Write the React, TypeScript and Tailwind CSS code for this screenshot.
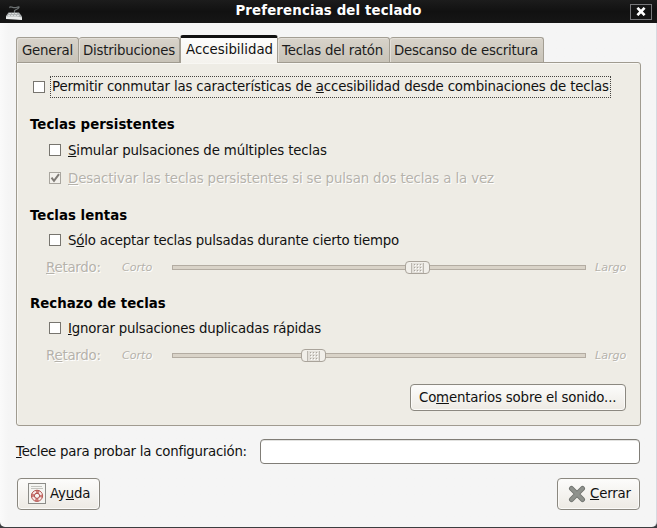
import type { ReactNode } from "react";

function Check({ checked = false }: { checked?: boolean }) {
  return (
    <span
      className={
        "block size-[12px] shrink-0 border " +
        (checked ? "border-[#a8a59e] bg-[#f3f1ec]" : "border-[#77756f] bg-white")
      }
    >
      {checked && (
        <svg viewBox="0 0 10 10" className="block size-[10px]" fill="none" stroke="#7f7b76" strokeWidth="2">
          <path d="M1.5 4.6 L4 7.8 L9 1.2" />
        </svg>
      )}
    </span>
  );
}

function Tab({ className, children }: { className: string; children: ReactNode }) {
  return (
    <div
      className={
        "h-[25px] shrink-0 whitespace-nowrap rounded-t-[3px] border border-b-0 border-[#a39e93] bg-linear-to-b from-[#d8d3ca] to-[#c8c3b8] leading-[26px] tracking-[-0.22px] text-[#1c1c1c] shadow-[inset_1px_1px_0_#e3dfd8] " +
        className
      }
    >
      {children}
    </div>
  );
}

function Heading({ children, className }: { children: ReactNode; className: string }) {
  return (
    <div className={"h-5 whitespace-nowrap pl-[13px] font-bold leading-[22px] tracking-[0.03px] text-black " + className}>
      {children}
    </div>
  );
}

function Option({
  children,
  className,
  disabled = false,
}: {
  children: ReactNode;
  className: string;
  disabled?: boolean;
}) {
  return (
    <div className={"flex h-5 items-center whitespace-nowrap pl-8 " + className}>
      <Check checked={disabled} />
      <span
        className={
          "h-5 pl-[7px] leading-[22px] " + (disabled ? "text-[#b5b2ab] [text-shadow:1px_1px_0_#ffffff]" : "")
        }
      >
        {children}
      </span>
    </div>
  );
}

function Delay({ thumb, children }: { thumb: string; children: ReactNode }) {
  return (
    <div className="mt-[7px] flex h-5 items-center whitespace-nowrap pl-[29px] leading-5 text-[#b5b2ab] [text-shadow:1px_1px_0_#ffffff]">
      <span className="h-5 w-[76px] leading-[22px] tracking-[-0.24px]">{children}</span>
      <span className="w-[50px] pt-px text-[11.1px] italic tracking-normal">Corto</span>
      <div className="relative mt-px h-[5px] w-[414px] border border-[#b3aca2] bg-[#d9d3c8]">
        <div
          className={
            "absolute -top-[5px] flex h-[13px] w-[25px] items-center justify-center rounded-[4px] border border-[#a9a39a] bg-[#f1efea] " +
            thumb
          }
        >
          <svg width="13" height="10" viewBox="0 0 13 10">
            <rect x="0" y="0" width="13" height="10" fill="#e2dfd9" />
            <path d="M.5 0V10M12.5 0V10" stroke="#bbb7b0" />
            <path d="M3 1.5H12M3 4.5H12M3 7.5H12" stroke="#aaa69f" strokeDasharray="1 2" />
            <path d="M4 2.5H12M4 5.5H12M4 8.5H12" stroke="#ffffff" strokeDasharray="1 2" />
          </svg>
        </div>
      </div>
      <span className="pl-[9px] pt-px text-[11.1px] italic tracking-normal">Largo</span>
    </div>
  );
}

const button =
  "flex shrink-0 items-center whitespace-nowrap rounded-[4px] border border-[#8b8880] bg-linear-to-b from-[#fcfcfb] to-[#edeae4] tracking-[-0.18px] shadow-[inset_0_0_0_1px_#fbfaf8]";

export default function App() {
  return (
    <div className="flex h-[528px] w-[657px] flex-col overflow-hidden bg-[#3c3d40] font-['DejaVu_Sans',sans-serif] text-[13.33px] tracking-[-0.16px] text-[#111111]">
      <header className="flex h-[23px] shrink-0 items-center bg-linear-to-b from-[#1c1c1c] via-[#111111] to-[#161616]">
        <svg width="18" height="17" viewBox="0 0 18 17" className="ml-[5px] mt-[2px] shrink-0">
          <path d="M5 4C4 1 8 4.500 11 3.500S15 2.500 13 4.500L9.500 6.500V9" fill="none" stroke="#6d7273" strokeWidth="1.2" />
          <path d="M3.500 8.500H14L17 12.500V15.500L1 14V12Z" fill="#aeb2b3" />
          <path d="M1 12.500H12L17 13.500V16L1 15Z" fill="#e9ebeb" />
          <path d="M4 9.500H13M3 11.500H14.500" stroke="#d9dcdc" strokeDasharray="2 1" />
        </svg>
        <h1 className="grow whitespace-nowrap pb-[2px] pl-[4px] text-center text-[13.33px] font-bold leading-5 tracking-[0.14px] text-white">
          Preferencias del teclado
        </h1>
        <div className="mr-[5px] flex h-4 w-[22px] items-center justify-center border border-[#77777a]">
          <svg width="10" height="9" viewBox="0 0 10 9" stroke="white" strokeWidth="2.6">
            <path d="M1.4 .8L8.6 8.2M8.6 .8L1.4 8.2" />
          </svg>
        </div>
      </header>
      <main className="h-[504px] shrink-0 rounded-b-[5px] border-r border-[#d7d9e0] bg-linear-to-r from-[#fafafa] to-[#f5f5f5] to-[8px] px-4 pt-3">
        <nav className="flex h-[27px] items-end">
          <Tab className="w-[63px] pl-[5px]">General</Tab>
          <Tab className="w-[101px] border-l-0 pl-[4px]">Distribuciones</Tab>
          <div className="relative z-10 -mb-px h-[28px] w-[98px] shrink-0 whitespace-nowrap rounded-t-[3px] border-x border-t-[3px] border-x-[#a39e93] border-t-[#111111] bg-linear-to-b from-[#fdfdfc] to-[#f4f2ed] pl-[5px] leading-[24px] tracking-normal">
            Accesibilidad
          </div>
          <Tab className="w-[112px] border-l-0 pl-[4px]">Teclas del ratón</Tab>
          <Tab className="w-[154px] border-l-0 pl-[4px]">Descanso de escritura</Tab>
        </nav>
        <section className="h-[364px] w-[625px] rounded-b-[3px] rounded-tr-[3px] border border-[#a09b90] bg-[#eeece5] pt-[13px] shadow-[inset_1px_1px_0_#f8f7f3]">
          <div className="flex h-[22px] items-center pl-4">
            <Check />
            <div className="ml-[5px] h-[22px] w-[561px] whitespace-nowrap border border-dotted border-[#44433f] pl-px leading-[19px]">
              Permitir conmutar las características de <u>a</u>ccesibilidad desde combinaciones de teclas
            </div>
          </div>
          <Heading className="mt-4">Teclas persistentes</Heading>
          <Option className="mt-[6px] tracking-[-0.13px]"><u>S</u>imular pulsaciones de múltiples teclas</Option>
          <Option className="mt-2 tracking-[-0.13px]" disabled><u>D</u>esactivar las teclas persistentes si se pulsan dos teclas a la vez</Option>
          <Heading className="mt-[17px]">Teclas lentas</Heading>
          <Option className="mt-[5px] tracking-[-0.2px]">S<u>ó</u>lo aceptar teclas pulsadas durante cierto tiempo</Option>
          <Delay thumb="left-[232px]"><u>R</u>etardo:</Delay>
          <Heading className="mt-4">Rechazo de teclas</Heading>
          <Option className="mt-[5px] tracking-[-0.2px]"><u>I</u>gnorar pulsaciones duplicadas rápidas</Option>
          <Delay thumb="left-[128px]">R<u>e</u>tardo:</Delay>
          <div className="mr-[14px] mt-[19px] flex justify-end">
            <button className={button + " h-[27px] w-[216px] pl-2"}>
              <span>Co<u>m</u>entarios sobre el sonido...</span>
            </button>
          </div>
        </section>
        <div className="mt-[13px] flex h-[25px] w-[624px] items-center whitespace-nowrap">
          <label className="w-[244px] tracking-[-0.24px]"><u>T</u>eclee para probar la configuración:</label>
          <div className="h-[25px] w-[380px] rounded-[4px] border border-[#807d77] bg-white shadow-[inset_0_1px_0_#e2e2e0]" />
        </div>
        <div className="mt-[14px] flex w-[624px] justify-between pl-px">
          <button className={button + " h-8 w-[83px] pl-[10px]"}>
            <svg width="19" height="22" viewBox="0 0 19 22" className="mr-[3px]">
              <rect x=".5" y=".5" width="17" height="20" fill="#f5f5f2" stroke="#8c8c88" />
              <path d="M3 3.5H14M3 5.5H15" stroke="#c3c3be" />
              <circle cx="9" cy="12.8" r="4.2" fill="none" stroke="#f8e9e7" strokeWidth="3" />
              <circle cx="9" cy="12.8" r="4.2" fill="none" stroke="#cf7d79" strokeWidth="3" strokeDasharray="3.3 3.3" strokeDashoffset="1.65" />
              <circle cx="9" cy="12.8" r="5.6" fill="none" stroke="#b04f4c" strokeWidth=".9" />
              <circle cx="9" cy="12.8" r="2.6" fill="#f8f8f5" stroke="#a8403e" strokeWidth="1" />
            </svg>
            <span>Ay<u>u</u>da</span>
          </button>
          <button className={button + " h-8 w-[83px] pl-[10px]"}>
            <svg width="18" height="18" viewBox="0 0 18 18" className="mr-[4px]" strokeLinecap="round">
              <path d="M3.5 3.5L14.5 14.5M14.5 3.5L3.5 14.5" stroke="#70736f" strokeWidth="5" />
              <path d="M3.5 3.5L14.5 14.5M14.5 3.5L3.5 14.5" stroke="#8f928d" strokeWidth="3.2" />
            </svg>
            <span><u>C</u>errar</span>
          </button>
        </div>
      </main>
    </div>
  );
}
